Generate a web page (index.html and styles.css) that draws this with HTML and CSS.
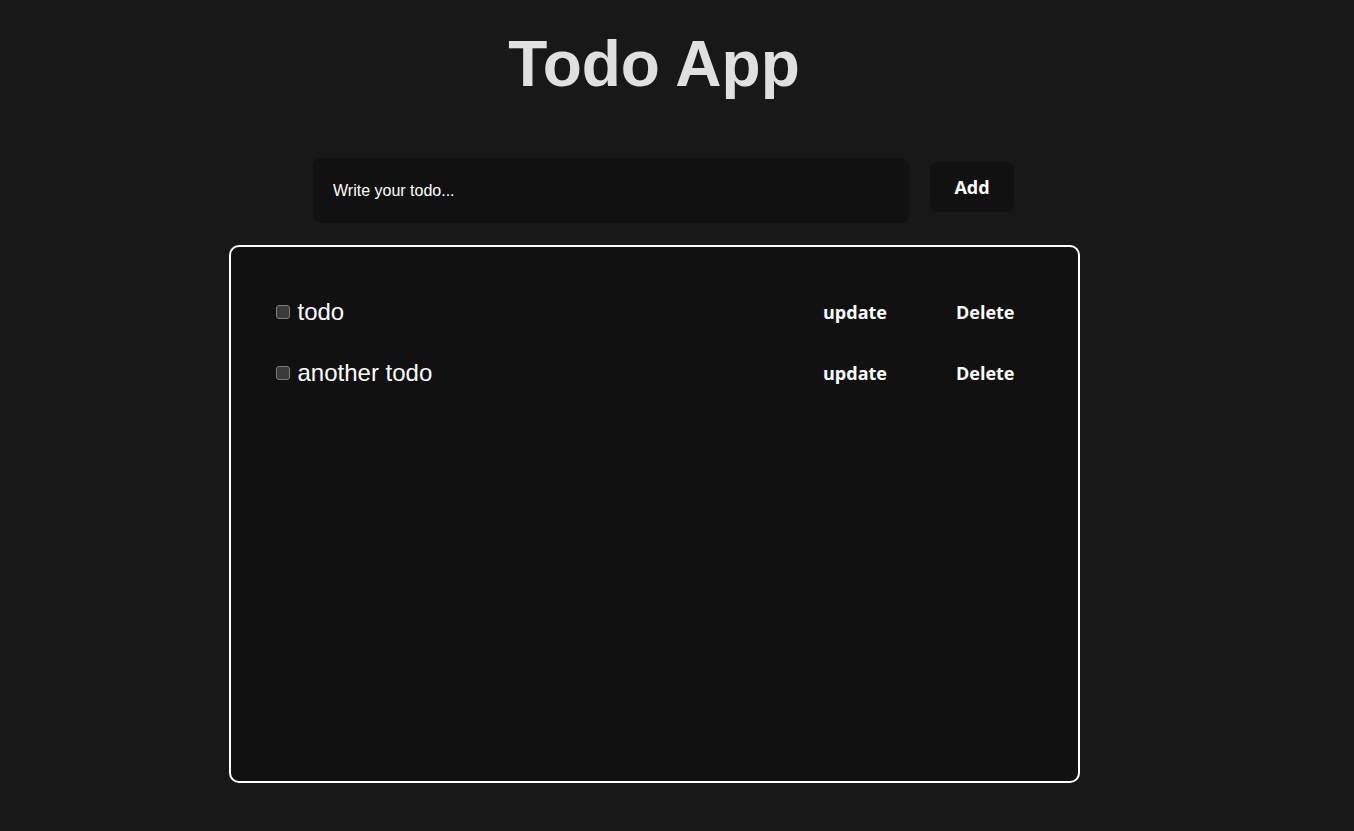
FILE: index.html
```html
<!DOCTYPE html>
<html lang="en">
<head>
<meta charset="UTF-8">
<meta name="viewport" content="width=device-width, initial-scale=1.0">
<title>Todo App</title>
<link rel="stylesheet" href="styles.css">
</head>
<body>
<div class="app">
  <h1 class="title">Todo App</h1>
  <form class="todo-form">
    <input type="text" class="todo-input" placeholder="Write your todo...">
    <button type="button" class="add-btn">Add</button>
  </form>
  <div class="todo-list">
    <div class="todo-item">
      <label class="todo-label">
        <input type="checkbox" class="todo-check">
        <span class="todo-text">todo</span>
      </label>
      <button type="button" class="item-btn">update</button>
      <button type="button" class="item-btn">Delete</button>
    </div>
    <div class="todo-item">
      <label class="todo-label">
        <input type="checkbox" class="todo-check">
        <span class="todo-text">another todo</span>
      </label>
      <button type="button" class="item-btn">update</button>
      <button type="button" class="item-btn">Delete</button>
    </div>
  </div>
</div>
</body>
</html>
```

FILE: styles.css
```css
body {
  margin: 0;
  padding: 0 46px 0 0;
  background-color: #181818;
  color: #fff;
  font-family: "Liberation Sans", Arial, sans-serif;
}
.app {
  width: 851px;
  margin: 0 auto;
}
.title {
  margin: 28px 0 0;
  font-size: 64px;
  line-height: 72px;
  text-align: center;
  color: #e0e0e0;
}
.todo-form {
  display: flex;
  align-items: flex-start;
  justify-content: center;
  padding-left: 19px;
  margin-top: 58px;
}
.todo-input {
  width: 596px;
  height: 65px;
  box-sizing: border-box;
  padding: 0 20px;
  background-color: #111;
  border: none;
  border-radius: 8px;
  color: #fff;
  font-family: "Liberation Sans", Arial, sans-serif;
  font-size: 16px;
  outline: none;
}
.todo-input::placeholder {
  color: #fff;
}
.add-btn {
  width: 84px;
  height: 50px;
  margin: 4px 0 0 21px;
  background-color: #111;
  border: none;
  border-radius: 8px;
  color: #fff;
  font-family: "Open Sans", sans-serif;
  font-size: 18px;
  font-weight: bold;
  cursor: pointer;
}
.todo-list {
  margin-top: 22px;
  height: 538px;
  box-sizing: border-box;
  padding: 45px 40px 0 45px;
  background-color: #111;
  border: 2px solid #fff;
  border-radius: 10px;
}
.todo-item {
  display: flex;
  align-items: center;
  height: 40px;
  margin-bottom: 21px;
}
.todo-label {
  display: flex;
  align-items: center;
  flex: 1;
}
.todo-check {
  appearance: none;
  box-sizing: border-box;
  width: 14px;
  height: 14px;
  margin: 0 8px 0 0;
  background-color: #3b3b3b;
  border: 1px solid #7a7a7a;
  border-radius: 3px;
}
.todo-text {
  font-size: 24px;
  color: #fff;
}
.item-btn {
  padding: 0 23px;
  height: 40px;
  background: none;
  border: none;
  color: #fff;
  font-family: "Open Sans", sans-serif;
  font-size: 18px;
  font-weight: bold;
  cursor: pointer;
}
.item-btn + .item-btn {
  margin-left: 23px;
}
```
